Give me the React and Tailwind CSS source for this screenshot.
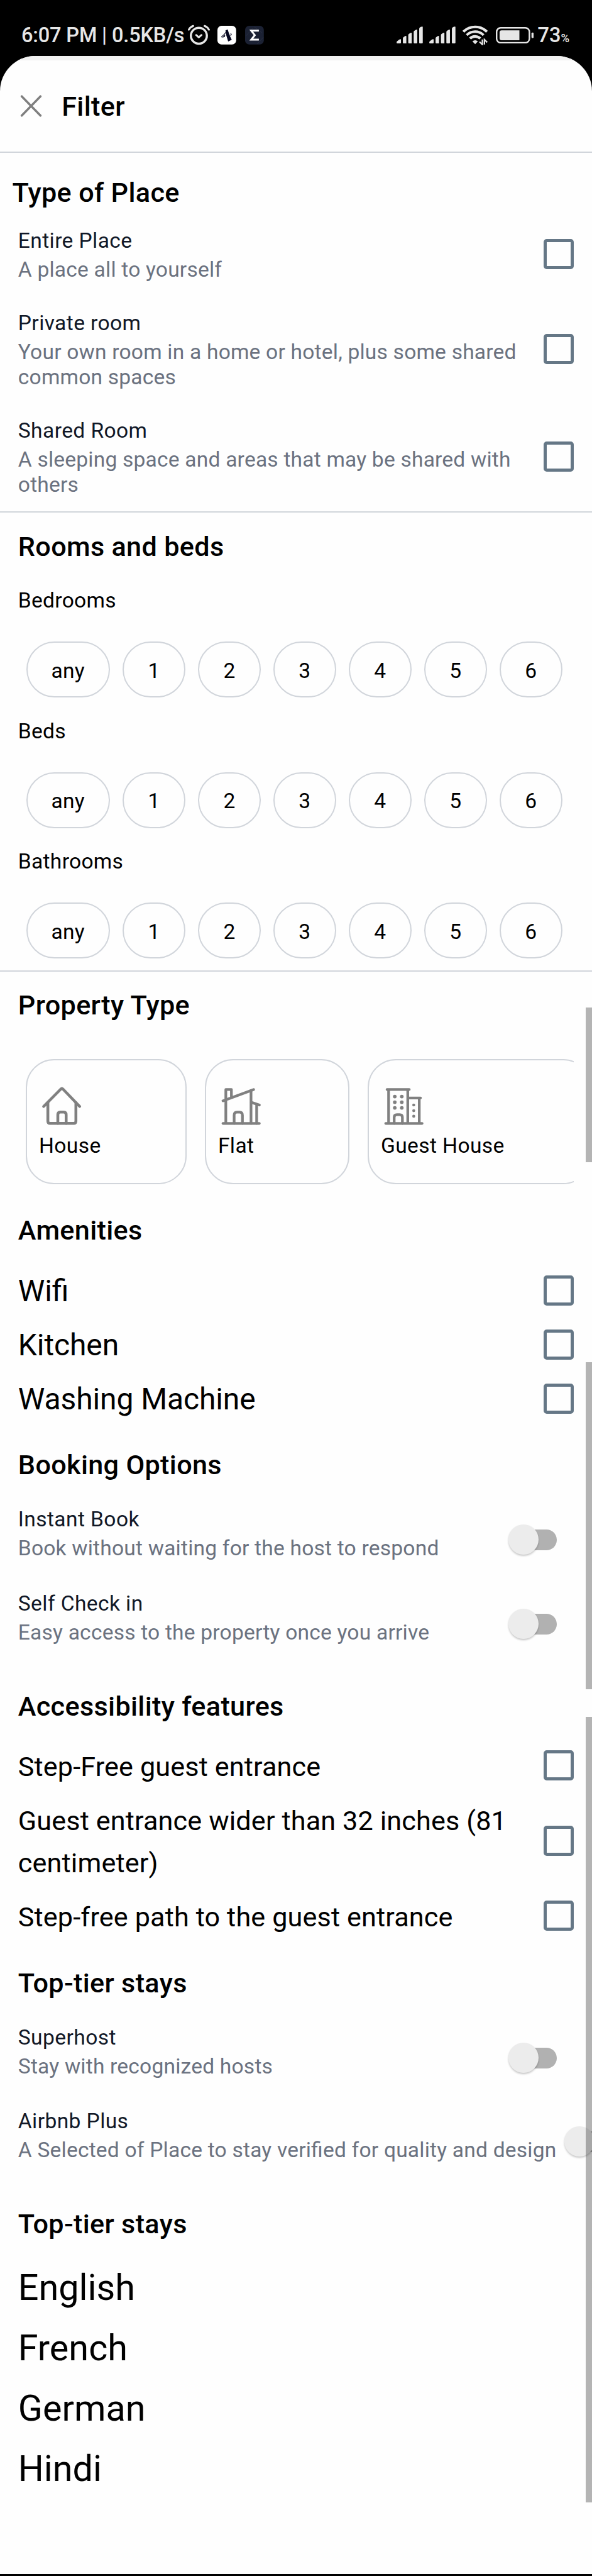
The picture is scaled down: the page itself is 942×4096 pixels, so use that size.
import React from "react";

const TITLE = "text-[43.17px] leading-[50px] font-medium tracking-[0.34px] text-black whitespace-nowrap";

function AlarmIcon() {
  return (
    <svg className="shrink-0 w-[34.9px] h-[33.1px]" viewBox="0 0 40 38" fill="none" stroke="#e6e6e6" strokeLinecap="round" strokeLinejoin="round">
      <circle cx="20" cy="20.5" r="14.6" strokeWidth="4" />
      <path d="M15 19.2l4.8 4.2 5-4.2" strokeWidth="3.4" />
      <path d="M1.6 9.4Q4.5 4.4 9.6 2.6M38.4 9.4Q35.5 4.4 30.4 2.6" strokeWidth="3.4" />
    </svg>
  );
}

function SignalIcon() {
  return (
    <svg className="shrink-0 w-[42px] h-[27.1px]" viewBox="0 0 48 31" fill="#e6e6e6">
      <path d="M0 29.5Q0 27 4 24.6Q8 22 8 24.5V29.5Q8 31 6.5 31H1.5Q0 31 0 29.5Z" />
      <path d="M11.5 21.5Q11.5 20 14 18.5Q17.8 16 17.8 18V31H13Q11.5 31 11.5 29.5Z" />
      <path d="M21.3 15.5Q21.3 14 24 12.6Q27.6 10.4 27.6 12.4V31H22.8Q21.3 31 21.3 29.5Z" />
      <path d="M31.2 9.8Q31.2 8.3 34 6.8Q37.7 4.6 37.7 6.6V29.5Q37.7 31 36.2 31H32.7Q31.2 31 31.2 29.5Z" />
      <path d="M41.2 4Q41.2 2.5 44 1Q47.7 -0.8 47.7 1.2V29.5Q47.7 31 46.2 31H42.7Q41.2 31 41.2 29.5Z" />
    </svg>
  );
}

function WifiIcon() {
  return (
    <svg className="shrink-0 w-[40.1px] h-[31.4px]" viewBox="0 0 46 36" fill="none" stroke="#e6e6e6">
      <path d="M1.5 12A30.5 30.5 0 0 1 44.5 12" strokeWidth="4.8" />
      <path d="M7.6 18.2A21.8 21.8 0 0 1 38.4 18.2" strokeWidth="4.6" />
      <path d="M13.6 24.4A13.3 13.3 0 0 1 32.4 24.4" strokeWidth="4.8" />
      <path d="M18 29.6Q23 25.4 28 29.6L23 34.6Z" fill="#e6e6e6" stroke="none" />
      <path d="M36.2 26V35.4L31 30.4M40 35.4V26.4L45 31.4" strokeWidth="2.6" />
    </svg>
  );
}

function BatteryIcon() {
  return (
    <svg className="shrink-0 w-[60.2px] h-[26.2px]" viewBox="0 0 69 30" fill="none">
      <rect x="1.4" y="1.4" width="59.8" height="27.2" rx="7.4" stroke="#e6e6e6" strokeWidth="2.8" />
      <path d="M10.5 6H43V24H10.5Q6.8 24 6.8 20.5V9.5Q6.8 6 10.5 6Z" fill="#e6e6e6" />
      <rect x="65" y="10" width="4" height="10" rx="1.8" fill="#e6e6e6" />
    </svg>
  );
}

function StatusBar() {
  return (
    <div className="flex h-[89px] items-start bg-black pt-[40px] pl-[34px] pr-[36px]">
      <div className="flex h-[32px] items-center">
        <span className="w-[265px] whitespace-nowrap text-[32.5px] leading-[32px] font-medium tracking-[-0.15px] text-[#e6e6e6]">6:07 PM | 0.5KB/s</span>
        <AlarmIcon />
        <svg className="ml-[12.5px] shrink-0 w-[29.8px] h-[29.8px]" viewBox="0 0 34 34">
          <rect width="34" height="34" rx="7.5" fill="#fff" />
          <path d="M14.5 8.5L18.5 6.5L20.5 12.5L22 17L26 25.5L19.5 28.5L16 17Z" fill="#060720" />
          <path d="M7 20.5Q13 16 18 8M9.5 21.5L13.5 17L12.5 20.5M22 17Q27.5 18 24 13.5" fill="none" stroke="#060720" strokeWidth="1.3" />
        </svg>
        <svg className="ml-[13.9px] shrink-0 w-[29.8px] h-[29.8px]" viewBox="0 0 34 34">
          <rect width="34" height="34" rx="7.5" fill="#1b2133" />
          <path d="M2 18L14 4M22 33L33 21M17 2L31 13" stroke="#2e3548" strokeWidth="0.8" />
          <path d="M25 8.9H11.2L17.6 17L11.2 25.2H25" fill="none" stroke="#fff" strokeWidth="3.4" />
        </svg>
      </div>
      <div className="ml-auto flex h-[32px] items-center">
        <SignalIcon />
        <span className="w-[10.2px]" />
        <SignalIcon />
        <span className="w-[11.4px]" />
        <WifiIcon />
        <span className="w-[13px]" />
        <BatteryIcon />
        <span className="ml-[6px] text-[32.5px] leading-[32px] font-medium text-[#e6e6e6]">73</span>
        <span className="mt-[9px] text-[18.5px] leading-[20px] font-medium text-[#e6e6e6]">%</span>
      </div>
    </div>
  );
}

function Checkbox() {
  return <div className="mb-[4px] size-[48px] shrink-0 rounded-[5px] border-[5px] border-[#657786]" />;
}

function Toggle() {
  return (
    <div className="relative mt-[19px] ml-[13px] flex h-[48px] w-[77px] shrink-0 items-center">
      <div className="ml-[10px] h-[33px] w-[67px] rounded-full bg-[#b1b1b1]" />
      <div className="absolute top-0 left-0 size-[48px] rounded-full bg-[#ececec] shadow-[0_2px_3px_rgba(0,0,0,0.22)]" />
    </div>
  );
}

function Labels({ title, text, nowrap }) {
  return (
    <div className={nowrap ? "shrink-0 whitespace-nowrap" : "w-[820px]"}>
      <div className="text-[33.57px] leading-[40px] tracking-[0.4px] text-[#111827]">{title}</div>
      <div className="mt-[6px] text-[33.57px] leading-[40px] tracking-[0.2px] text-[#6b7280]">{text}</div>
    </div>
  );
}

function CheckOption({ title, text }) {
  return (
    <div className="flex items-center justify-between">
      <Labels title={title} text={text} />
      <Checkbox />
    </div>
  );
}

function ToggleOption({ title, text }) {
  return (
    <div className="flex items-center justify-between pr-[56px]">
      <Labels title={title} text={text} nowrap />
      <Toggle />
    </div>
  );
}

function Pills({ label }) {
  return (
    <div>
      <div className="pl-[28.8px] text-[33.57px] leading-[40px] tracking-[0.3px] text-black">{label}</div>
      <div className="mt-[45px] flex gap-[20.2px] pl-[41.5px]">
        {["any", "1", "2", "3", "4", "5", "6"].map((v) => (
          <div
            key={v}
            className={
              (v === "any" ? "w-[133.4px]" : "w-[99.8px]") +
              " flex h-[89px] shrink-0 items-center justify-center rounded-full border-2 border-[#d1d5db] text-[33.57px] leading-[40px] tracking-[0.3px] text-black"
            }
          >
            <span className="mt-[4px]">{v}</span>
          </div>
        ))}
      </div>
    </div>
  );
}

const ICON = "h-[62.8px] w-[76.7px]";

function HouseIcon() {
  return (
    <svg className={ICON} viewBox="0 0 88 72" fill="none" stroke="#808080" strokeWidth="5.2" strokeLinecap="round" strokeLinejoin="round">
      <path d="M9.8 37L41 5.4Q43 3.4 45 5.4L75.4 37" />
      <path d="M17.4 30V64Q17.4 68 21.4 68H64.6Q68.6 68 68.6 64V30" />
      <path d="M35.6 68V52.5Q35.6 47.4 40 47.4H46.4Q50.8 47.4 50.8 52.5V68" />
    </svg>
  );
}

function FlatIcon() {
  return (
    <svg className={ICON} viewBox="0 0 88 72" fill="none" stroke="#808080" strokeWidth="4.9" strokeLinecap="round" strokeLinejoin="round">
      <path d="M10 68H76.5M10 26.8L66 6.2M15.3 68V6.2H25.5V20" />
      <path d="M61.3 68V8M61.3 29.4L76.5 34.4M71.6 68V33" />
      <path d="M30.5 68V53Q30.5 47.4 35.5 47.4H40.5Q45.6 47.4 45.6 53V68" />
    </svg>
  );
}

function GuestIcon() {
  return (
    <svg className={ICON} viewBox="0 0 88 72" fill="none" stroke="#808080" strokeWidth="4.9" strokeLinecap="round" strokeLinejoin="round">
      <path d="M10 68H76.5M12.5 6.2H53M15.3 68V6.2M50.3 68V6.2M50.3 21.6H73.6M71.3 68V21.6" />
      <path d="M25.5 68V57Q25.5 52 30.5 52H35.5Q40.5 52 40.5 57V68" />
      <g fill="#808080" stroke="none">
        <circle cx="26.6" cy="19" r="3.3" /><circle cx="39.4" cy="19" r="3.3" />
        <circle cx="26.6" cy="29.3" r="3.3" /><circle cx="39.4" cy="29.3" r="3.3" />
        <circle cx="26.6" cy="39.6" r="3.3" /><circle cx="39.4" cy="39.6" r="3.3" />
        <circle cx="61.2" cy="34.4" r="2.7" /><circle cx="61.2" cy="44.8" r="2.7" /><circle cx="61.2" cy="55" r="2.7" />
      </g>
    </svg>
  );
}

function Card({ width, label, children }) {
  return (
    <div className={width + " h-[199px] shrink-0 rounded-[45px] border-2 border-[#d1d5db] pt-[41px] pl-[17.5px]"}>
      {children}
      <div className="mt-[12px] pl-px whitespace-nowrap text-[33.57px] leading-[40px] tracking-[0.4px] text-black">{label}</div>
    </div>
  );
}

function BigRow({ size, children }) {
  return (
    <div className="flex items-center justify-between">
      <div className={size + " w-[820px] leading-[67px] text-black"}>{children}</div>
      <Checkbox />
    </div>
  );
}

export default function App() {
  return (
    <div className="relative h-[4096px] w-[942px] overflow-hidden bg-black font-[Roboto,sans-serif] [font-feature-settings:'liga']">
      <StatusBar />
      <div className="h-[4003.5px] overflow-hidden rounded-t-[56px] bg-[#fefefe]">
        <div className="h-[7px] bg-[#f1f1f1]" />
        <header className="flex h-[145px] items-start pt-[49px] pl-[31.6px]">
          <svg className="mt-[6px] h-[35px] w-[35px]" viewBox="0 0 40 40" fill="none" stroke="#808080" strokeWidth="4" strokeLinecap="round">
            <path d="M3 2.5L37 37.5M37 2.5L3 37.5" />
          </svg>
          <h1 className={TITLE + " ml-[31.6px]"}>Filter</h1>
        </header>
        <div className="h-[2px] bg-[#d1d5db]" />

        <section className="h-[570px] pt-[39px]">
          <h2 className={TITLE + " pl-[19.5px]"}>Type of Place</h2>
          <div className="mt-[31px] flex flex-col gap-[45px] pr-[29px] pl-[28.8px]">
            <CheckOption title="Entire Place" text="A place all to yourself" />
            <CheckOption title="Private room" text="Your own room in a home or hotel, plus some shared common spaces" />
            <CheckOption title="Shared Room" text="A sleeping space and areas that may be shared with others" />
          </div>
        </section>
        <div className="h-[2px] bg-[#d1d5db]" />

        <section className="h-[728px] pt-[30px]">
          <h2 className={TITLE + " pl-[28.8px]"}>Rooms and beds</h2>
          <div className="mt-[40px] flex flex-col gap-[33.7px]">
            <Pills label="Bedrooms" />
            <Pills label="Beds" />
            <Pills label="Bathrooms" />
          </div>
        </section>
        <div className="h-[2px] bg-[#d1d5db]" />

        <section className="pt-[29px] pl-[28.8px]">
          <h2 className={TITLE}>Property Type</h2>
          <div className="mt-[60px] mr-[29px] flex gap-[29.5px] overflow-hidden pl-[12.7px]">
            <Card width="w-[255.4px]" label="House"><HouseIcon /></Card>
            <Card width="w-[229.5px]" label="Flat"><FlatIcon /></Card>
            <Card width="w-[356px]" label="Guest House"><GuestIcon /></Card>
          </div>
        </section>

        <section className="pt-[49.3px] pr-[29px] pl-[28.8px]">
          <h2 className={TITLE}>Amenities</h2>
          <div className="mt-[38px] flex flex-col gap-[19px]">
            <BigRow size="text-[47.96px] tracking-[-0.08px]">Wifi</BigRow>
            <BigRow size="text-[47.96px] tracking-[-0.08px]">Kitchen</BigRow>
            <BigRow size="text-[47.96px] tracking-[-0.08px]">Washing Machine</BigRow>
          </div>
        </section>

        <section className="pt-[45.3px] pl-[28.8px]">
          <h2 className={TITLE}>Booking Options</h2>
          <div className="mt-[41px] flex flex-col gap-[48px]">
            <ToggleOption title="Instant Book" text="Book without waiting for the host to respond" />
            <ToggleOption title="Self Check in" text="Easy access to the property once you arrive" />
          </div>
        </section>

        <section className="pt-[73.3px] pr-[29px] pl-[28.8px]">
          <h2 className={TITLE}>Accessibility features</h2>
          <div className="mt-[36.7px] flex flex-col gap-[19px]">
            <BigRow size="text-[43.17px] tracking-[0.14px]">Step-Free guest entrance</BigRow>
            <BigRow size="text-[43.17px] tracking-[0.14px]">Guest entrance wider than 32 inches (81 centimeter)</BigRow>
            <BigRow size="text-[43.17px] tracking-[0.14px]">Step-free path to the guest entrance</BigRow>
          </div>
        </section>

        <section className="pt-[47px] pl-[28.8px]">
          <h2 className={TITLE}>Top-tier stays</h2>
          <div className="mt-[41px] flex flex-col gap-[47px]">
            <ToggleOption title="Superhost" text="Stay with recognized hosts" />
            <ToggleOption title="Airbnb Plus" text="A Selected of Place to stay verified for quality and design" />
          </div>
        </section>

        <section className="pt-[73.4px] pl-[28.8px]">
          <h2 className={TITLE}>Top-tier stays</h2>
          <div className="mt-[41.4px] flex flex-col gap-[26px] text-[57.56px] leading-[70px] text-black">
            <div>English</div>
            <div>French</div>
            <div>German</div>
            <div>Hindi</div>
          </div>
        </section>
      </div>

      <div className="absolute top-[1602px] right-0 h-[246px] w-[10px] bg-black/[0.29]" />
      <div className="absolute top-[2166px] right-0 h-[520px] w-[10px] bg-black/[0.29]" />
      <div className="absolute top-[2730px] right-0 h-[1249px] w-[10px] bg-black/[0.29]" />
    </div>
  );
}
